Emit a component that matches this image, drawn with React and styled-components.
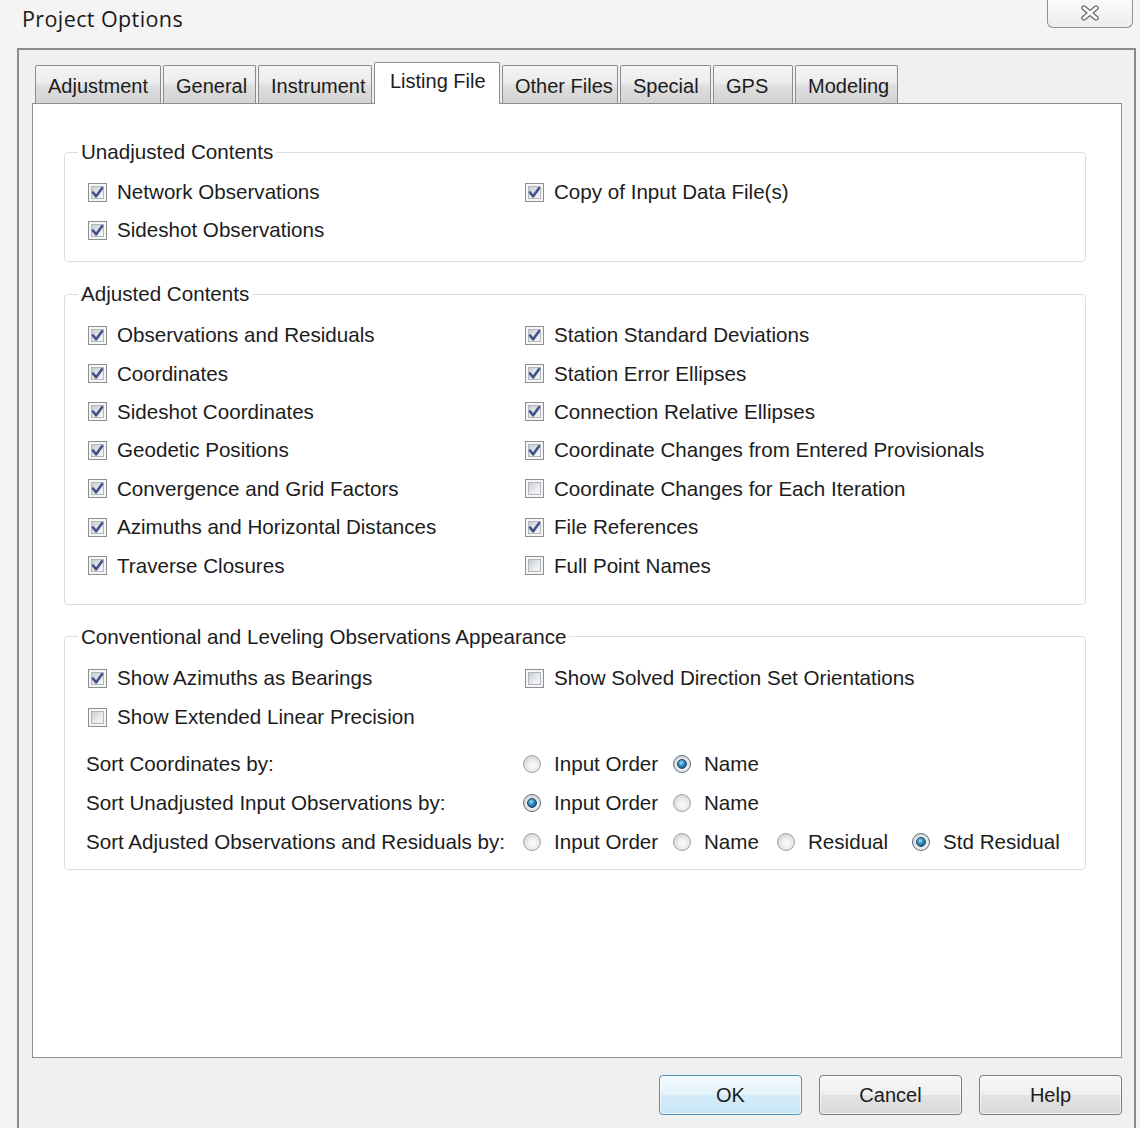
import React from "react";
import styled, { createGlobalStyle } from "styled-components";

const GlobalStyle = createGlobalStyle`
  html, body {
    margin: 0;
    padding: 0;
    background: #f4f4f4;
  }
  body {
    font-family: "Liberation Sans", Arial, sans-serif;
    font-size: 20.6px;
    color: #1c1c1c;
  }
`;

const TABS = [
  { label: "Adjustment", width: 126 },
  { label: "General", width: 93 },
  { label: "Instrument", width: 114 },
  { label: "Listing File", width: 126, active: true },
  { label: "Other Files", width: 116 },
  { label: "Special", width: 91 },
  { label: "GPS", width: 80 },
  { label: "Modeling", width: 103 },
];

const UNADJUSTED = {
  left: [
    { label: "Network Observations", on: true },
    { label: "Sideshot Observations", on: true },
  ],
  right: [{ label: "Copy of Input Data File(s)", on: true }],
};

const ADJUSTED = {
  left: [
    { label: "Observations and Residuals", on: true },
    { label: "Coordinates", on: true },
    { label: "Sideshot Coordinates", on: true },
    { label: "Geodetic Positions", on: true },
    { label: "Convergence and Grid Factors", on: true },
    { label: "Azimuths and Horizontal Distances", on: true },
    { label: "Traverse Closures", on: true },
  ],
  right: [
    { label: "Station Standard Deviations", on: true },
    { label: "Station Error Ellipses", on: true },
    { label: "Connection Relative Ellipses", on: true },
    { label: "Coordinate Changes from Entered Provisionals", on: true },
    { label: "Coordinate Changes for Each Iteration", on: false },
    { label: "File References", on: true },
    { label: "Full Point Names", on: false },
  ],
};

const APPEARANCE = {
  left: [
    { label: "Show Azimuths as Bearings", on: true },
    { label: "Show Extended Linear Precision", on: false },
  ],
  right: [{ label: "Show Solved Direction Set Orientations", on: false }],
};

const SORTS = [
  {
    label: "Sort Coordinates by:",
    options: [
      { label: "Input Order", width: 150 },
      { label: "Name", width: 104, on: true },
    ],
  },
  {
    label: "Sort Unadjusted Input Observations by:",
    options: [
      { label: "Input Order", width: 150, on: true },
      { label: "Name", width: 104 },
    ],
  },
  {
    label: "Sort Adjusted Observations and Residuals by:",
    options: [
      { label: "Input Order", width: 150 },
      { label: "Name", width: 104 },
      { label: "Residual", width: 135 },
      { label: "Std Residual", on: true },
    ],
  },
];

/* ---------- window chrome ---------- */

const TitleBar = styled.div`
  height: 48px;
  display: flex;
  justify-content: space-between;
  align-items: flex-start;
  padding: 0 7px 0 22px;
`;

const Title = styled.div`
  font-family: "Open Sans", "Noto Sans", sans-serif;
  font-size: 21.5px;
  letter-spacing: 0.4px;
  line-height: 26px;
  padding-top: 6px;
  color: #1a1a1a;
`;

const CloseButton = styled.div`
  width: 86px;
  height: 29px;
  box-sizing: border-box;
  margin-top: -1px;
  border: 1px solid #8e9196;
  border-top: none;
  border-radius: 0 0 6px 6px;
  background: linear-gradient(#fafafa, #ececec);
  display: flex;
  align-items: center;
  justify-content: center;
`;

const Frame = styled.div`
  margin-left: 17px;
  width: 1119px;
  height: 1080px;
  box-sizing: border-box;
  border: 2px solid #8b8b8b;
  border-bottom: none;
  background: #f0f0f0;
  padding: 12px 12px 0 13px;
`;

/* ---------- tabs ---------- */

const TabRow = styled.div`
  display: flex;
  align-items: flex-end;
  gap: 2px;
  height: 41px;
  padding-left: 3px;
  font-size: 20px;
`;

const Tab = styled.div`
  width: ${(p) => p.$width}px;
  box-sizing: border-box;
  height: ${(p) => (p.$active ? 42 : 38)}px;
  margin-bottom: ${(p) => (p.$active ? -1 : 0)}px;
  position: relative;
  z-index: ${(p) => (p.$active ? 2 : 1)};
  border: 1px solid #898c95;
  border-bottom: none;
  border-radius: 2px 2px 0 0;
  background: ${(p) =>
    p.$active
      ? "#ffffff"
      : "linear-gradient(#f4f4f4, #ececec 45%, #dedede 55%, #d3d3d3)"};
  display: flex;
  align-items: center;
  padding: ${(p) => (p.$active ? "0 0 4px 15px" : "3px 0 0 12px")};
  white-space: nowrap;
`;

const Panel = styled.div`
  height: 955px;
  box-sizing: border-box;
  border: 1px solid #8c8e94;
  background: #ffffff;
  padding: 36px 35px 0 31px;
  display: flex;
  flex-direction: column;
  gap: 20px;
`;

/* ---------- group boxes ---------- */

const Group = styled.fieldset`
  margin: 0;
  padding: 0 0 ${(p) => p.$padBottom}px 23px;
  border: 1px solid #d5dfe5;
  border-radius: 4px;
  min-width: 0;
`;

const Legend = styled.legend`
  margin-left: -10px;
  padding: 0 3px;
  line-height: 24px;
`;

const Columns = styled.div`
  display: grid;
  grid-template-columns: 437px 1fr;
  padding-top: ${(p) => p.$padTop}px;
`;

const Column = styled.div`
  display: flex;
  flex-direction: column;
`;

const Row = styled.label`
  display: flex;
  align-items: center;
  gap: 10px;
  height: ${(p) => p.$height}px;
  white-space: nowrap;
`;

const Box = styled.span`
  position: relative;
  width: 19px;
  height: 19px;
  box-sizing: border-box;
  border: 1px solid #8e8f8f;
  background: #f6f6f6;
  padding: 2px;
  display: flex;
  flex-shrink: 0;
`;

const BoxFill = styled.span`
  flex: 1;
  border: 1px solid #b3b7bd;
  background: linear-gradient(135deg, #c8ccd2, #e9ebee 60%, #f7f7f8);
`;

const Tick = styled.svg`
  position: absolute;
  left: 1px;
  top: 1px;
`;

function CheckBox({ label, on, height }) {
  return (
    <Row $height={height}>
      <Box>
        <BoxFill />
        {on && (
          <Tick width="15" height="15" viewBox="0 0 15 15">
            <path
              d="M3 7.5 L6.2 11.3 L12 3.2"
              fill="none"
              stroke="#3f5389"
              strokeWidth="2.6"
              strokeLinecap="round"
              strokeLinejoin="round"
            />
          </Tick>
        )}
      </Box>
      {label}
    </Row>
  );
}

function CheckGroup({ title, data, rowHeight, padTop, padBottom }) {
  return (
    <Group $padBottom={padBottom}>
      <Legend>{title}</Legend>
      <Columns $padTop={padTop}>
        <Column>
          {data.left.map((c) => (
            <CheckBox key={c.label} {...c} height={rowHeight} />
          ))}
        </Column>
        <Column>
          {data.right.map((c) => (
            <CheckBox key={c.label} {...c} height={rowHeight} />
          ))}
        </Column>
      </Columns>
    </Group>
  );
}

/* ---------- radio rows ---------- */

const SortList = styled.div`
  display: flex;
  flex-direction: column;
  margin-top: 8px;
  margin-left: -2px;
`;

const SortRow = styled.div`
  display: grid;
  grid-template-columns: 437px 1fr;
  align-items: center;
  height: 39px;
`;

const SortLabel = styled.span`
  white-space: nowrap;
`;

const Options = styled.div`
  display: flex;
  align-items: center;
`;

const Option = styled.label`
  display: flex;
  align-items: center;
  gap: 13px;
  width: ${(p) => (p.$width ? `${p.$width}px` : "auto")};
  white-space: nowrap;
`;

const RadioDot = styled.span`
  width: 18px;
  height: 18px;
  box-sizing: border-box;
  border-radius: 50%;
  border: 1px solid ${(p) => (p.$on ? "#5b6f84" : "#a2a3a3")};
  background: radial-gradient(circle at 55% 60%, #f7f7f7 20%, #d9d9d9 70%, #c6c6c6);
  display: flex;
  align-items: center;
  justify-content: center;
  flex-shrink: 0;

  &::after {
    content: "";
    display: ${(p) => (p.$on ? "block" : "none")};
    width: 10px;
    height: 10px;
    box-sizing: border-box;
    border-radius: 50%;
    border: 1px solid #17486a;
    background: radial-gradient(circle at 40% 35%, #a6e0f7, #2a86b8 45%, #0d4a71);
  }
`;

/* ---------- bottom buttons ---------- */

const ButtonRow = styled.div`
  display: flex;
  justify-content: flex-end;
  gap: 17px;
  margin-top: 17px;
  font-size: 20px;
`;

const Button = styled.div`
  width: 143px;
  height: 40px;
  box-sizing: border-box;
  border-radius: 4px;
  border: 1px solid ${(p) => (p.$primary ? "#4d8fbf" : "#7a7a7a")};
  background: ${(p) =>
    p.$primary
      ? "linear-gradient(#f1f9fd, #e4f3fb 50%, #d4ecf8 50%, #c8e5f5)"
      : "linear-gradient(#f6f6f6, #efefef 50%, #e3e3e3 50%, #dadada)"};
  box-shadow: inset 0 0 0 1px rgba(255, 255, 255, 0.75);
  display: flex;
  align-items: center;
  justify-content: center;
  color: #1c1c1c;
`;

export default function App() {
  return (
    <>
      <GlobalStyle />
      <TitleBar>
        <Title>Project Options</Title>
        <CloseButton>
          <svg width="20" height="16" viewBox="0 0 20 16">
            <path
              d="M4 3 L16 13 M16 3 L4 13"
              stroke="#6c6c6c"
              strokeWidth="5.4"
              strokeLinecap="round"
            />
            <path
              d="M4 3 L16 13 M16 3 L4 13"
              stroke="#ffffff"
              strokeWidth="2.8"
              strokeLinecap="round"
            />
          </svg>
        </CloseButton>
      </TitleBar>

      <Frame>
        <TabRow>
          {TABS.map((t) => (
            <Tab key={t.label} $width={t.width} $active={t.active}>
              {t.label}
            </Tab>
          ))}
        </TabRow>

        <Panel>
          <CheckGroup
            title="Unadjusted Contents"
            data={UNADJUSTED}
            rowHeight={38}
            padTop={9}
            padBottom={12}
          />
          <CheckGroup
            title="Adjusted Contents"
            data={ADJUSTED}
            rowHeight={38.4}
            padTop={10}
            padBottom={19}
          />
          <Group $padBottom={7}>
            <Legend>Conventional and Leveling Observations Appearance</Legend>
            <Columns $padTop={10}>
              <Column>
                {APPEARANCE.left.map((c) => (
                  <CheckBox key={c.label} {...c} height={39} />
                ))}
              </Column>
              <Column>
                {APPEARANCE.right.map((c) => (
                  <CheckBox key={c.label} {...c} height={39} />
                ))}
              </Column>
            </Columns>
            <SortList>
              {SORTS.map((s) => (
                <SortRow key={s.label}>
                  <SortLabel>{s.label}</SortLabel>
                  <Options>
                    {s.options.map((o) => (
                      <Option key={o.label} $width={o.width}>
                        <RadioDot $on={o.on} />
                        {o.label}
                      </Option>
                    ))}
                  </Options>
                </SortRow>
              ))}
            </SortList>
          </Group>
        </Panel>

        <ButtonRow>
          <Button $primary>OK</Button>
          <Button>Cancel</Button>
          <Button>Help</Button>
        </ButtonRow>
      </Frame>
    </>
  );
}
